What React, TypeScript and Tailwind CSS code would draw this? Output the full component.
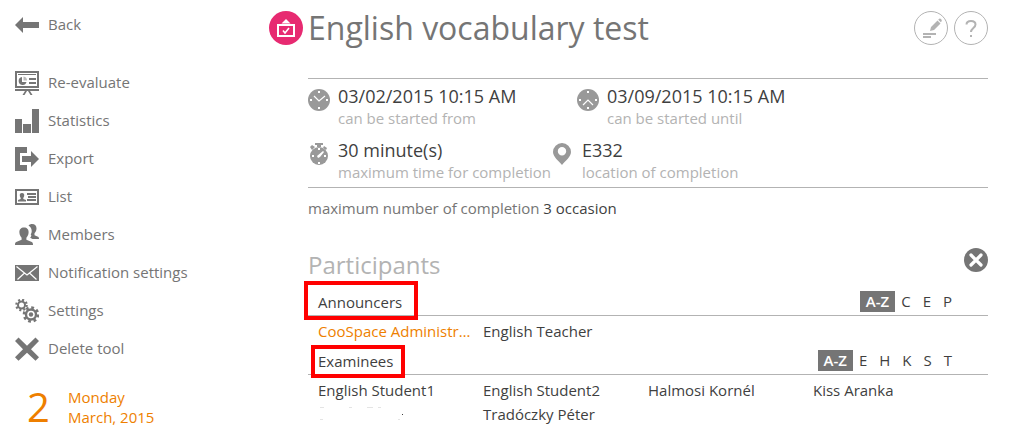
import type { ReactNode } from "react";

type IconProps = { children: ReactNode };

// 24px grey glyph used in the side menu
function MenuIcon({ children }: IconProps) {
  return (
    <svg viewBox="0 0 24 24" className="size-6 shrink-0 fill-[#757575]" aria-hidden="true">
      {children}
    </svg>
  );
}

// 22px light grey glyph used beside the test details
function InfoIcon({ children }: IconProps) {
  return (
    <svg viewBox="0 0 22 22" className="mt-2 size-[22px] shrink-0 fill-[#999999]" aria-hidden="true">
      {children}
    </svg>
  );
}

const menu = [
  {
    label: "Re-evaluate",
    icon: (
      <>
        <path fillRule="evenodd" d="M0 0h24v17H0zM2 2v13h20V2z" />
        <path d="M3 3h18v1H3zM0 18h24v2H0zM14 7h7v2h-7zM14 11h7v2h-7z" />
        <path d="M7 6a4 4 0 1 0 4.500 5H7z" />
        <path d="M8.500 5.500v4h3.500a4 4 0 0 0-3.500-4z" opacity="0.5" />
        <path d="M10 20h2l-2.500 4h-2zM13 20h2l2.500 4h-2z" />
      </>
    ),
  },
  { label: "Statistics", icon: <path d="M0 10h7v14H0zM8 15h8v9H8zM17 0h7v24h-7z" /> },
  {
    label: "Export",
    icon: <path d="M0 0h12v6H5v12h7v6H0zM7 9h9V4l8 8-8 8v-5H7z" />,
  },
  {
    label: "List",
    icon: (
      <>
        <path fillRule="evenodd" d="M0 4h24v16H0zM2 6v12h20V6z" />
        <path d="M12 8h9v2h-9zM13 11h8v2h-8zM12 14h9v2h-9z" />
        <path d="M7 8a2.200 2.200 0 0 1 2.200 2.500c0 1.200-.7 1.800-.9 2.400v1.100l2.700 1v1.500H3V15l2.700-1v-1.100c-.2-.6-.9-1.200-.9-2.400A2.200 2.200 0 0 1 7 8z" />
      </>
    ),
  },
  {
    label: "Members",
    icon: (
      <>
        <path d="M9 4.500c3 0 4.800 2 4.600 5-.1 2.500-1.200 4-2.200 5.200v2l5.400 2.200c1 .5 1.200 1.600 1.200 3.100H0c0-1.600.2-2.700 1.200-3.100l5.400-2.200v-2C5.600 13.500 4.500 12 4.400 9.500c-.2-3 1.600-5 4.600-5z" />
        <path d="M13.500 2.500c1-1 2.200-1.500 3.500-1.500 3 0 4.600 2 4.500 4.600 0 2-1 3.600-2 4.700v1.900l3.500 1.600c.8.400 1 1.200 1 2.200h-6.500l-2.300-1.300c1.500-1.800 1.300-2.700.5-3.200 1.700-2.500 1.500-6.500-2.200-9z" />
      </>
    ),
  },
  {
    label: "Notification settings",
    icon: (
      <>
        <path d="M0 4h24v16H0z" />
        <path
          d="M1.500 5.500 9.500 12l2.500 2 2.500-2 8-6.500M9.500 12l-7 6.500M14.500 12l7 6.500"
          fill="none"
          stroke="#fff"
          strokeWidth="1.200"
        />
      </>
    ),
  },
  {
    label: "Settings",
    icon: (
      <>
        <circle cx="6.500" cy="6" r="3.500" fill="none" stroke="#757575" strokeWidth="2" />
        <circle cx="6.500" cy="6" r="5.200" fill="none" stroke="#757575" strokeWidth="2.200" strokeDasharray="2 2.080" />
        <circle cx="16" cy="15.500" r="5" fill="none" stroke="#757575" strokeWidth="2.400" />
        <circle cx="16" cy="15.500" r="7" fill="none" stroke="#757575" strokeWidth="2.600" strokeDasharray="2.800 2.700" />
        <circle cx="16" cy="15.500" r="2.200" />
      </>
    ),
  },
  {
    label: "Delete tool",
    icon: <path d="M3.500.5 0 4l8 8.200L0 20.300l3.500 3.500 8.500-8 8.500 8 3.500-3.500-8-8.100L24 4 20.500.5 12 8.800z" />,
  },
];

const groups = [
  {
    title: "Announcers",
    letters: ["C", "E", "P"],
    frame: "-top-[9px] -left-1 h-[39px] w-[114px]",
    people: ["CooSpace Administr…", "English Teacher"],
  },
  {
    title: "Examinees",
    letters: ["E", "H", "K", "S", "T"],
    frame: "-top-1 left-[3px] h-[33px] w-[94px]",
    people: ["English Student1", "English Student2", "Halmosi Kornél", "Kiss Aranka", "", "Tradóczky Péter"],
  },
];

function ClockFace({ hands }: { hands: string }) {
  return (
    <InfoIcon>
      <circle cx="11" cy="11" r="11" />
      <path d="M10 2h2v2h-2zM10 18h2v2h-2zM2 10h2v2H2zM18 10h2v2h-2z" fill="#fff" />
      <path d={hands} fill="none" stroke="#fff" strokeWidth="1.200" />
    </InfoIcon>
  );
}

function Detail({ icon, value, label }: { icon: ReactNode; value: string; label: string }) {
  return (
    <div className="flex gap-2">
      {icon}
      <div>
        <div className="text-lg leading-[30px] text-[#3f3f3f]">{value}</div>
        <div className="-mt-[3px] text-[15px] leading-5 text-[#b3b3b3]">{label}</div>
      </div>
    </div>
  );
}

export default function App() {
  return (
    <div className="flex min-h-screen bg-white font-['Open_Sans',sans-serif] text-[15px] leading-6 text-[#3f3f3f]">
      <aside className="w-[269px] shrink-0 pt-1.5 pl-[15px] text-[#757575]">
        <a href="#back" className="flex h-[38px] items-center gap-[9px]">
          <MenuIcon>
            <path d="M0 12 8 4v5h16v6H8v5z" />
          </MenuIcon>
          <span className="pb-0.5">Back</span>
        </a>
        <nav className="mt-5">
          {menu.map((item) => (
            <a key={item.label} href="#tool" className="flex h-[38px] items-center gap-[9px]">
              <MenuIcon>{item.icon}</MenuIcon>
              <span className="pb-0.5">{item.label}</span>
            </a>
          ))}
        </nav>
        <div className="mt-[19px] flex items-center pl-3 text-[#ee7f00]">
          <span className="w-[41px] text-[40px] leading-10">2</span>
          <span className="leading-5">
            Monday
            <br />
            March, 2015
          </span>
        </div>
      </aside>

      <main className="min-w-0 flex-1 pt-2.5 pr-[26px]">
        <header className="flex items-center">
          <svg viewBox="0 0 34 34" className="size-[34px] shrink-0" aria-hidden="true">
            <circle cx="17" cy="17" r="17" fill="#e72a71" />
            <path d="m17 8 4.500 4.500h-9z" fill="#fff" />
            <path d="M9 14h16v11H9z" fill="none" stroke="#fff" strokeWidth="2" />
            <path d="m14 19.500 2 2.500 4-5" fill="none" stroke="#fff" strokeWidth="1.600" />
          </svg>
          <h1 className="ml-[5px] flex-1 text-[32px] leading-9 text-[#757575]">English vocabulary test</h1>
          <div className="flex gap-1.5 text-[#b3b3b3]">
            <button type="button" aria-label="Edit" className="size-[34px] rounded-full border border-[#b3b3b3]">
              <svg viewBox="0 0 32 32" className="size-8 fill-current" aria-hidden="true">
                <path d="M8 21h13v2H8zM8 24h8v2H8zM15 19l1-4 6.500-6.500 3 3L19 18zM23.200 7.800l1-1q1-.6 2 .4t.4 2l-.7 1.100z" />
              </svg>
            </button>
            <button type="button" aria-label="Help" className="size-[34px] rounded-full border border-[#b3b3b3]">
              <svg viewBox="0 0 32 32" className="size-8" aria-hidden="true">
                <path
                  d="M11.500 12.500c0-2.200 2-3.500 4.500-3.500s4.500 1.300 4.500 3.500c0 3.500-4.500 3.500-4.500 7.500"
                  fill="none"
                  stroke="currentColor"
                  strokeWidth="2"
                />
                <path d="M15 23h2v2h-2z" fill="currentColor" />
              </svg>
            </button>
          </div>
        </header>

        <div className="pl-[39px]">
          <section className="mt-8 border-y border-[#b3b3b3] pt-0.5 pb-[5px]">
            <div className="flex">
              <div className="w-[269px]">
                <Detail
                  icon={<ClockFace hands="m6 7 5 5 6-5" />}
                  value="03/02/2015 10:15 AM"
                  label="can be started from"
                />
              </div>
              <Detail
                icon={<ClockFace hands="m6 16 5-5 5 5" />}
                value="03/09/2015 10:15 AM"
                label="can be started until"
              />
            </div>
            <div className="mt-[7px] flex">
              <div className="w-[244px]">
                <Detail
                  icon={
                    <InfoIcon>
                      <path d="M7 0h8v2h-2v2h-4V2H7zM2 4l2-2 3 2-3 3zM16 3l3 2-1 2-3-2z" />
                      <circle cx="11" cy="13" r="9" />
                      <path
                        d="M10 5h2v2h-2zM10 19h2v2h-2zM4 12h2v2H4zM16 12h2v2h-2zM9 13l6-5 1 1-4 5-2 1z"
                        fill="#fff"
                      />
                    </InfoIcon>
                  }
                  value="30 minute(s)"
                  label="maximum time for completion"
                />
              </div>
              <Detail
                icon={
                  <InfoIcon>
                    <path
                      fillRule="evenodd"
                      d="M10 0a9 9 0 0 1 9 9c0 5-6 9-9 13C7 18 1 14 1 9a9 9 0 0 1 9-9zm0 4a4.200 4.200 0 1 0 0 8.400A4.200 4.200 0 0 0 10 4z"
                    />
                  </InfoIcon>
                }
                value="E332"
                label="location of completion"
              />
            </div>
          </section>

          <p className="mt-2 text-[#757575]">
            maximum number of completion <span className="text-[#3f3f3f]">3 occasion</span>
          </p>

          <section className="mt-7">
            <div className="flex items-start justify-between">
              <h2 className="text-2xl leading-[34px] text-[#b3b3b3]">Participants</h2>
              <button type="button" aria-label="Close">
                <svg viewBox="0 0 24 24" className="size-6" aria-hidden="true">
                  <circle cx="12" cy="12" r="12" fill="#757575" />
                  <path d="m7 7 10 10M17 7 7 17" stroke="#fff" strokeWidth="3.200" strokeLinecap="round" />
                </svg>
              </button>
            </div>

            <div className="mt-2">
              {groups.map((group) => (
                <div key={group.title} className="pb-1.5">
                  <div className="relative flex h-[26px] items-start justify-between border-b border-[#b3b3b3] pr-[30px] pl-2.5">
                    <h3>{group.title}</h3>
                    <div className="flex pt-px leading-[21px]">
                      <button type="button" className="bg-[#757575] px-1.5 font-semibold text-white">
                        A-Z
                      </button>
                      {group.letters.map((letter) => (
                        <button key={letter} type="button" className="px-1.5">
                          {letter}
                        </button>
                      ))}
                    </div>
                    <span className={`pointer-events-none absolute border-4 border-[#ff0000] ${group.frame}`} />
                  </div>
                  <ul className="grid grid-cols-[repeat(4,165px)] pt-[3px] pl-2.5">
                    {group.people.map((person, i) => (
                      <li key={i} className="whitespace-nowrap">
                        {person ? (
                          <a href="#person" className={person.startsWith("CooSpace") ? "text-[#ee7f00]" : ""}>
                            {person}
                          </a>
                        ) : (
                          <svg viewBox="0 0 90 24" className="h-6 w-[90px] fill-[#e4e4e4]" aria-hidden="true">
                            <path d="M2 5h4v1H2zM31 5h3v1h-3zM49 5h6v1h-6zM60 5h3v1h-3zM2 17h3v1H2zM80 17h2v1h-2z" />
                            <path d="M84 12h1v1h-1z" fill="#3f3f3f" />
                          </svg>
                        )}
                      </li>
                    ))}
                  </ul>
                </div>
              ))}
            </div>
          </section>
        </div>
      </main>
    </div>
  );
}
